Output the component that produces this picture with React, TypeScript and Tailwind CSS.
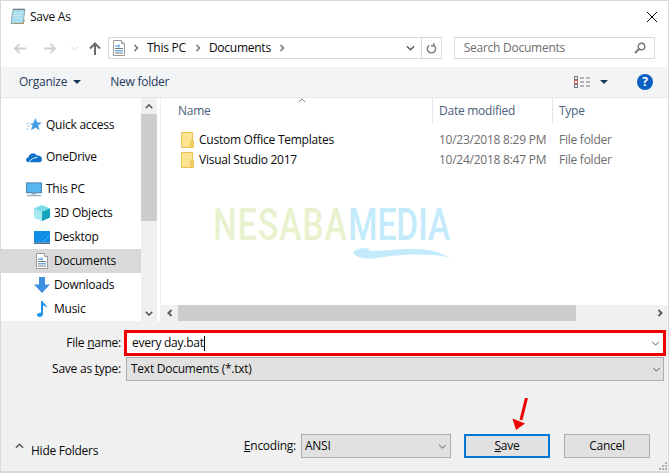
import React from "react";

const Chev = ({ className = "", d = "M1 1l4 4 4-4", w = 1.2 }: { className?: string; d?: string; w?: number }) => (
  <svg viewBox="0 0 10 6" className={className} fill="none" stroke="currentColor" strokeWidth={w}>
    <path d={d} />
  </svg>
);

const Side = ({ className = "", d = "M1.500 1l3 3-3 3", w = 1.6 }: { className?: string; d?: string; w?: number }) => (
  <svg viewBox="0 0 6 8" className={className} fill="none" stroke="currentColor" strokeWidth={w}>
    <path d={d} />
  </svg>
);

const Caret = ({ className = "" }: { className?: string }) => (
  <svg viewBox="0 0 8 4" className={className}>
    <path d="M0 0h8L4 4z" fill="currentColor" />
  </svg>
);

const NotepadIcon = () => (
  <svg viewBox="0 0 16 17" className="w-4 h-[17px]">
    <path d="M3 1.500h12L13 15.500H1z" fill="#a6dcec" stroke="#7f9aa5" strokeWidth="0.8" />
    <path d="M4 15.500h9.500l.8-4-1 4z" fill="#b08d57" stroke="#b08d57" strokeWidth="0.6" />
    <path d="M3.500 1.200h11.500" stroke="#555" strokeWidth="1.4" strokeDasharray="1 1" />
    <path d="M4 5h8.500M3.700 7.500h8.500M3.400 10h8.500" stroke="#d5eef5" strokeWidth="0.8" />
  </svg>
);

const DocIcon = () => (
  <svg viewBox="0 0 12 16" className="w-3 h-4">
    <path d="M.5.5h8l3 3v12H.5z" fill="#fff" stroke="#9a9a9a" />
    <path d="M8.500.5v3h3" fill="#e8e8e8" stroke="#9a9a9a" />
    <path d="M2 6h4M6 4.500v3" stroke="#2f87d8" />
    <path d="M2 8.500h8M2 13h8" stroke="#7c7c7c" />
    <path d="M2 10.800h8" stroke="#2f87d8" />
  </svg>
);

const StarIcon = () => (
  <svg viewBox="0 0 16 15" className="w-4 h-[15px]">
    <path d="M9.500 0l1.600 4.600H16l-3.900 3 1.500 5-4.100-3-4.600 3 1.700-5-2.600-2h2.800L7.600 4.600z" fill="#3f9ce8" />
    <path d="M0 5.500h3M1 8h3M0 11h3" stroke="#a9d4f5" />
  </svg>
);

const CloudIcon = () => (
  <svg viewBox="0 0 17 11" className="w-[17px] h-[11px]">
    <path d="M2.800 10.500C.9 10.500 0 9.300 0 8c0-1.400 1-2.400 2.300-2.500C3 3 5 1 7.500 1c1.900 0 3.400 1 4.100 2.600 2.700-.6 5.400.9 5.400 4 0 1.700-1.100 2.900-2.800 2.900z" fill="#0f73c9" />
    <path d="M3 10.500C5.500 7 8.500 5.500 12 5.500" stroke="#fff" strokeWidth="0.9" fill="none" />
  </svg>
);

const PcIcon = () => (
  <svg viewBox="0 0 17 15" className="w-[17px] h-[15px]">
    <rect x="0.500" y="0.500" width="16" height="10.500" fill="#55b6f2" stroke="#4b7ea3" />
    <path d="M6 11h5v2H6z" fill="#9fb2bf" />
    <path d="M1 14h15" stroke="#9fb2bf" strokeWidth="1.5" />
  </svg>
);

const CubeIcon = () => (
  <svg viewBox="0 0 16 16" className="w-4 h-4">
    <path d="M8 0l8 3.500v9L8 16l-8-3.500v-9z" fill="#79dbe6" />
    <path d="M8 7l8-3.500v9L8 16z" fill="#15a4bc" />
    <path d="M0 3.500L8 7v9l-8-3.500z" fill="#a9e8ef" />
  </svg>
);

const DesktopIcon = () => (
  <svg viewBox="0 0 16 13" className="w-4 h-[13px]">
    <rect width="16" height="11.500" fill="#0f8ee6" />
    <path d="M0 11.500h16v1.500H0z" fill="#4a6f8c" />
    <path d="M9 11L15 5" stroke="#52b6f5" />
  </svg>
);

const DownIcon = () => (
  <svg viewBox="0 0 16 16" className="w-4 h-4">
    <path d="M5 0h6v7.500h5L8 16 0 7.500h5z" fill="#3f8fe0" />
  </svg>
);

const MusicIcon = () => (
  <svg viewBox="0 0 11 16" className="w-[11px] h-4">
    <path d="M4 0h1.500c.3 2.500 4.500 3 4.500 7-1-1.500-2.500-2.500-4-2.500V13c0 1.800-1.500 3-3.300 3C1.200 16 0 15.200 0 14c0-1.500 1.700-2.500 4-2.200z" fill="#1e94ea" />
  </svg>
);

const FolderIcon = () => (
  <svg viewBox="0 0 13 16" className="w-[13px] h-4">
    <path d="M.5.5h11v15H.5z" fill="#fbe38f" stroke="#e9c14f" />
    <path d="M10 15.500V8.500h2.500v7z" fill="#f4d26d" stroke="#e9c14f" />
  </svg>
);

const NavRow = ({ icon, label, indent = false, active = false, gap = false }: { icon: React.ReactNode; label: string; indent?: boolean; active?: boolean; gap?: boolean }) => (
  <div className={`h-6 shrink-0 flex items-center ${active ? "bg-[#d9d9d9]" : ""} ${gap ? "mt-2" : ""} ${indent ? "pl-[33px]" : "pl-[25px]"}`}>
    <span className="w-4 flex justify-center shrink-0 mr-1">{icon}</span>
    <span>{label}</span>
  </div>
);

const App = () => {
  return (
    <div className="relative w-[669px] h-[473px] overflow-hidden bg-white border border-[#d9d9d9] border-b-2 flex flex-col text-[12px] text-[#0a0a0a] font-['Open_Sans','Noto_Sans',sans-serif] tracking-[-0.25px]">
      {/* title bar */}
      <div className="h-[31px] shrink-0 flex items-center pl-[9px] pr-[10px]">
        <NotepadIcon />
        <span className="ml-[4px]">Save As</span>
        <svg viewBox="0 0 10 10" className="w-[10px] h-[10px] ml-auto mr-[1px] text-black" stroke="currentColor">
          <path d="M0 0l10 10M10 0L0 10" />
        </svg>
      </div>

      {/* address row */}
      <div className="h-[35px] shrink-0 flex items-start pt-[5px] pl-[13px] pr-[13px]">
        <div className="h-[22px] flex items-center text-[#cfcfcf]">
          <svg viewBox="0 0 12 11" className="w-3 h-[11px]" fill="none" stroke="currentColor" strokeWidth="1.800"><path d="M5.500 1L1 5.500 5.500 10M1 5.500h11" /></svg>
          <svg viewBox="0 0 12 11" className="w-3 h-[11px] ml-[18px]" fill="none" stroke="currentColor" strokeWidth="1.800"><path d="M6.500 1L11 5.500 6.500 10M11 5.500H0" /></svg>
          <Chev className="w-[7px] h-[5px] ml-[15px]" />
          <svg viewBox="0 0 12 13" className="w-3 h-[13px] ml-[11px] text-[#6b6b6b]" fill="none" stroke="currentColor" strokeWidth="2"><path d="M1 6.500L6 1.500l5 5M6 1.500V13" /></svg>
        </div>
        <div className="ml-[7px] w-[335px] h-[22px] border border-[#d9d9d9] flex items-center pl-[4px]">
          <DocIcon />
          <Side className="w-[6px] h-2 ml-[8px] text-[#777]" />
          <span className="ml-[8px]">This PC</span>
          <Side className="w-[6px] h-2 ml-[9px] text-[#777]" />
          <span className="ml-[8px]">Documents</span>
          <Side className="w-[6px] h-2 ml-[8px] text-[#777]" />
          <Chev className="w-[9px] h-[6px] ml-auto mr-[6px] text-[#555]" w={1.500} />
          <div className="w-[20px] h-full border-l border-[#d9d9d9] flex items-center justify-center">
            <svg viewBox="0 0 12 12" className="w-[11px] h-[11px] text-[#777]" fill="none" stroke="currentColor" strokeWidth="1.500"><path d="M8.500 2.500a4.500 4.500 0 1 1-5 0M8.500 0v3h-3" /></svg>
          </div>
        </div>
        <div className="ml-[12px] w-[202px] h-[22px] border border-[#d9d9d9] flex items-center pl-[9px] pr-[8px] text-[#6d6d6d]">
          <span>Search Documents</span>
          <svg viewBox="0 0 12 12" className="w-3 h-3 ml-auto text-[#777]" fill="none" stroke="currentColor"><circle cx="7.500" cy="4.500" r="3.300" strokeWidth="1.400" /><path d="M5 7l-4 4" strokeWidth="2" /></svg>
        </div>
      </div>

      {/* toolbar */}
      <div className="h-[30px] shrink-0 bg-[#f3f4f6] flex items-center pl-[18px] pr-[15px] text-[#1e395b]">
        <span>Organize</span>
        <Caret className="w-[8px] h-[4px] ml-[6px]" />
        <span className="ml-[29px]">New folder</span>
        <svg viewBox="0 0 16 12" className="w-4 h-3 ml-auto text-[#777]" fill="none" stroke="currentColor">
          <rect x="0.500" y="0.500" width="3" height="3" />
          <rect x="0.500" y="4.500" width="3" height="3" stroke="#c66" />
          <rect x="0.500" y="8.500" width="3" height="3" />
          <path d="M6 2h4M12 2h4M6 6h4M12 6h4M6 10h4M12 10h4" />
        </svg>
        <Caret className="w-[8px] h-[4px] ml-[10px]" />
        <span className="ml-[29px] w-4 h-4 rounded-full bg-[#0b5fc0] text-white flex items-center justify-center font-bold text-[12px] leading-none">?</span>
      </div>

      <div className="h-px shrink-0 bg-[#e5e5e5]" />

      {/* browser */}
      <div className="flex h-[223px] shrink-0 relative">
        <div className="w-[140px] shrink-0 flex flex-col pt-[15px] overflow-hidden">
          <NavRow icon={<StarIcon />} label="Quick access" />
          <NavRow icon={<CloudIcon />} label="OneDrive" gap />
          <NavRow icon={<PcIcon />} label="This PC" gap />
          <NavRow icon={<CubeIcon />} label="3D Objects" indent />
          <NavRow icon={<DesktopIcon />} label="Desktop" indent />
          <NavRow icon={<DocIcon />} label="Documents" indent active />
          <NavRow icon={<DownIcon />} label="Downloads" indent />
          <NavRow icon={<MusicIcon />} label="Music" indent />
        </div>
        <div className="w-4 shrink-0 bg-[#f0f0f0] flex flex-col">
          <div className="h-[16px] flex items-center justify-center text-[#606060]">
            <Chev className="w-2 h-[5px]" d="M1 5l4-4 4 4" w={2} />
          </div>
          <div className="h-[107px] bg-[#cdcdcd]" />
          <div className="mt-auto h-[16px] flex items-center justify-center text-[#606060]">
            <Chev className="w-2 h-[5px]" w={2} />
          </div>
        </div>
        <div className="w-[3px] shrink-0" />
        <div className="flex-1 flex flex-col min-w-0 border-l border-[#f0f0f0]">
          <div className="h-[25px] shrink-0 grid grid-cols-[271px_120px_1fr] text-[#4c607a] relative">
            <div className="pl-[17px] flex items-center">Name</div>
            <div className="pl-[6px] flex items-center border-l border-[#e5e5e5]">Date modified</div>
            <div className="pl-[6px] flex items-center border-l border-[#e5e5e5]">Type</div>
            <Chev className="absolute left-[137px] top-0 w-[8px] h-[5px] text-[#777]" d="M1 5l4-4 4 4" />
          </div>
          <div className="flex-1 pt-[7px]">
            {[
              ["Custom Office Templates", "10/23/2018 8:29 PM"],
              ["Visual Studio 2017", "10/24/2018 8:47 PM"],
            ].map(([name, date]) => (
              <div key={name} className="h-5 grid grid-cols-[271px_120px_1fr] items-center">
                <div className="pl-5 flex items-center">
                  <FolderIcon />
                  <span className="ml-[5px]">{name}</span>
                </div>
                <div className="pl-[7px] text-[#6d6d6d]">{date}</div>
                <div className="pl-[7px] text-[#6d6d6d]">File folder</div>
              </div>
            ))}
          </div>
          <div className="h-4 shrink-0 bg-[#f0f0f0] flex items-center text-[#606060]">
            <div className="w-[17px] flex justify-center">
              <Side className="w-[6px] h-2" d="M4.500 1l-3 3 3 3" w={2} />
            </div>
            <div className="w-[398px] h-full bg-[#cdcdcd]" />
            <div className="flex-1 flex justify-end pr-[5px]">
              <Side className="w-[6px] h-2" w={2} />
            </div>
          </div>
        </div>

        {/* watermark */}
        <div className="absolute left-[212px] top-[105px] w-[244px] h-[60px] pointer-events-none font-['Roboto',sans-serif] font-medium tracking-[1.5px]">
          <div className="absolute left-0 top-0 origin-left scale-x-[0.76] whitespace-nowrap text-[44px] leading-[44px]">
            <span className="text-[#e9f2cf]">NESABA</span>
            <span className="text-[#c4ebfc] tracking-[0px]">MEDIA</span>
          </div>
          <svg viewBox="0 0 100 12" className="absolute left-[140px] top-[45px] w-[100px] h-[12px]">
            <path d="M3 2C8-1 20 0 16 3c15 0 40-4 60-1 8 1 14 5 22 8C80 5 50 6 30 9 18 12 5 11 1 6-1 5 1 3 3 2z" fill="#c4ebfc" />
          </svg>
        </div>
      </div>

      {/* save options */}
      <div className="flex-1 bg-[#f0f0f0] flex flex-col relative">
        <div className="grid grid-cols-[125px_540px] pt-[9px] items-center">
          <div className="text-right pr-[5px] h-[26px] leading-[26px]">
            File <span className="underline">n</span>ame:
          </div>
          <div className="-ml-[2px] h-[26px] border-[3px] border-[#f00000] bg-white flex items-center pl-[5px] pr-[2px]">
            <span>every day.bat</span>
            <span className="w-px h-[15px] bg-black" />
            <Chev className="w-[9px] h-[5px] ml-auto mr-[1px] text-[#555]" />
          </div>
          <div className="text-right pr-[5px] h-[24px] leading-[24px] mt-[1px]">
            Save as <span className="underline">t</span>ype:
          </div>
          <div className="h-[24px] mt-[1px] w-[538px] border border-[#adadad] bg-[#e1e1e1] flex items-center pl-[4px] pr-[2px]">
            <span>Text Documents (*.txt)</span>
            <Chev className="w-[9px] h-[5px] ml-auto text-[#555]" />
          </div>
        </div>
        <div className="mt-auto mb-[13px] h-[24px] flex items-center pr-[18px]">
          <Chev className="w-[9px] h-[6px] ml-[14px] text-[#555]" d="M1 5l4-4 4 4" w={1.600} />
          <span className="ml-[7px] mt-[10px]">Hide Folders</span>
          <span className="ml-auto"><span className="underline">E</span>ncoding:</span>
          <div className="ml-[5px] w-[150px] h-full border border-[#adadad] bg-[#e1e1e1] flex items-center pl-[3px] pr-[3px]">
            <span>ANSI</span>
            <Chev className="w-[9px] h-[5px] ml-auto text-[#555]" />
          </div>
          <button className="ml-[13px] w-[86px] h-full border-2 border-[#0078d7] bg-[#e1e1e1] flex items-center justify-center">
            <span><span className="underline">S</span>ave</span>
          </button>
          <button className="ml-[14px] w-[86px] h-full border border-[#adadad] bg-[#e1e1e1] flex items-center justify-center">
            Cancel
          </button>
        </div>
        <div className="absolute right-[1px] bottom-[1px] grid grid-cols-3 gap-px w-[8px] text-[#b0b0b0]">
          <span /><span /><span className="w-[2px] h-[2px] bg-current" />
          <span /><span className="w-[2px] h-[2px] bg-current" /><span className="w-[2px] h-[2px] bg-current" />
          <span className="w-[2px] h-[2px] bg-current" /><span className="w-[2px] h-[2px] bg-current" /><span className="w-[2px] h-[2px] bg-current" />
        </div>
      </div>

      {/* annotation arrow */}
      <svg viewBox="0 0 16 32" className="absolute left-[511px] top-[397px] w-4 h-8">
        <path d="M14.500 0L9 22" stroke="#f00000" strokeWidth="3" fill="none" />
        <path d="M.5 20.500l12.500 5-9 6.500z" fill="#f00000" />
      </svg>
    </div>
  );
};

export default App;
